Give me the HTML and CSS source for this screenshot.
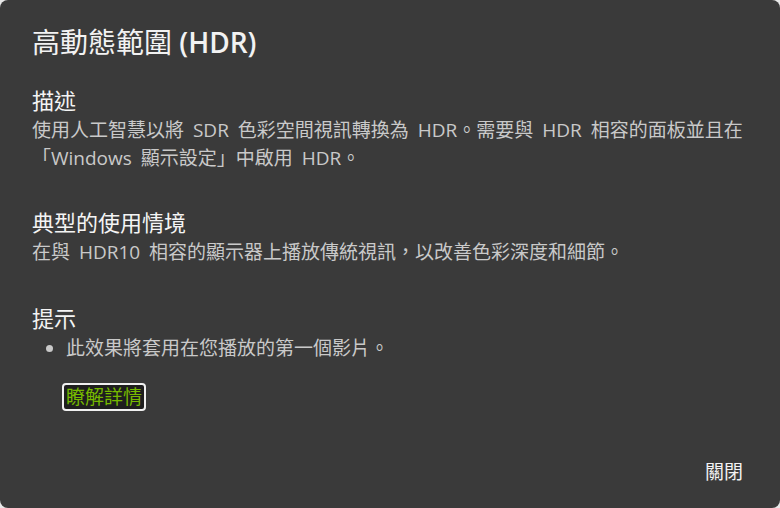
FILE: index.html
```html
<!DOCTYPE html>
<html lang="zh-Hant">
<head>
<meta charset="utf-8">
<link rel="stylesheet" href="styles.css">
</head>
<body>
<div class="dialog">
  <h1 class="title">高動態範圍 <span class="title-latin">(HDR)</span></h1>
  <section class="sec sec-first">
    <h2 class="heading">描述</h2>
    <p class="text">使用人工智慧以將 SDR 色彩空間視訊轉換為 HDR。需要與 HDR 相容的面板並且在「Windows 顯示設定」中啟用 HDR。</p>
  </section>
  <section class="sec">
    <h2 class="heading">典型的使用情境</h2>
    <p class="text">在與 HDR10 相容的顯示器上播放傳統視訊，以改善色彩深度和細節。</p>
  </section>
  <section class="sec sec-tips">
    <h2 class="heading">提示</h2>
    <ul class="tips">
      <li>此效果將套用在您播放的第一個影片。</li>
    </ul>
    <button class="learn">瞭解詳情</button>
  </section>
  <div class="footer">
    <button class="close">關閉</button>
  </div>
</div>
</body>
</html>
```
FILE: styles.css
```css
html, body {
  margin: 0;
  padding: 0;
  background: #e8e8e8;
}
body {
  font-family: "Open Sans", "Noto Sans CJK TC", sans-serif;
}
.dialog {
  box-sizing: border-box;
  width: 780px;
  height: 508px;
  background: #3a3a3a;
  border-radius: 8px;
  padding: 22px 37px 22px 32px;
  display: flex;
  flex-direction: column;
}
.title {
  margin: 0;
  font-size: 28px;
  line-height: 40px;
  font-weight: 400;
  color: #f2f2f2;
}
.title-latin {
  font-weight: 600;
}
.sec {
  margin-top: 35px;
}
.sec-first {
  margin-top: 23px;
}
.sec-tips {
  margin-top: 37px;
}
.heading {
  margin: 0;
  font-size: 22px;
  line-height: 31px;
  font-weight: 400;
  color: #f4f4f4;
}
.text {
  margin: 0;
  font-size: 19px;
  line-height: 28px;
  color: #c9c9c9;
  word-spacing: 4px;
}
.tips {
  margin: 0;
  padding-left: 34px;
  font-size: 19px;
  line-height: 28px;
  color: #c9c9c9;
}
.learn {
  margin: 21px 0 0 30px;
  display: block;
  font-family: inherit;
  font-size: 19px;
  line-height: 24px;
  padding: 0 2px;
  color: #76b900;
  background: #1e1e1e;
  border: 2px solid #f0f0f0;
  border-radius: 4px;
}
.footer {
  margin-top: auto;
  display: flex;
  justify-content: flex-end;
}
.close {
  font-family: inherit;
  font-size: 19px;
  line-height: 28px;
  padding: 0;
  background: none;
  border: none;
  color: #f2f2f2;
}
```
